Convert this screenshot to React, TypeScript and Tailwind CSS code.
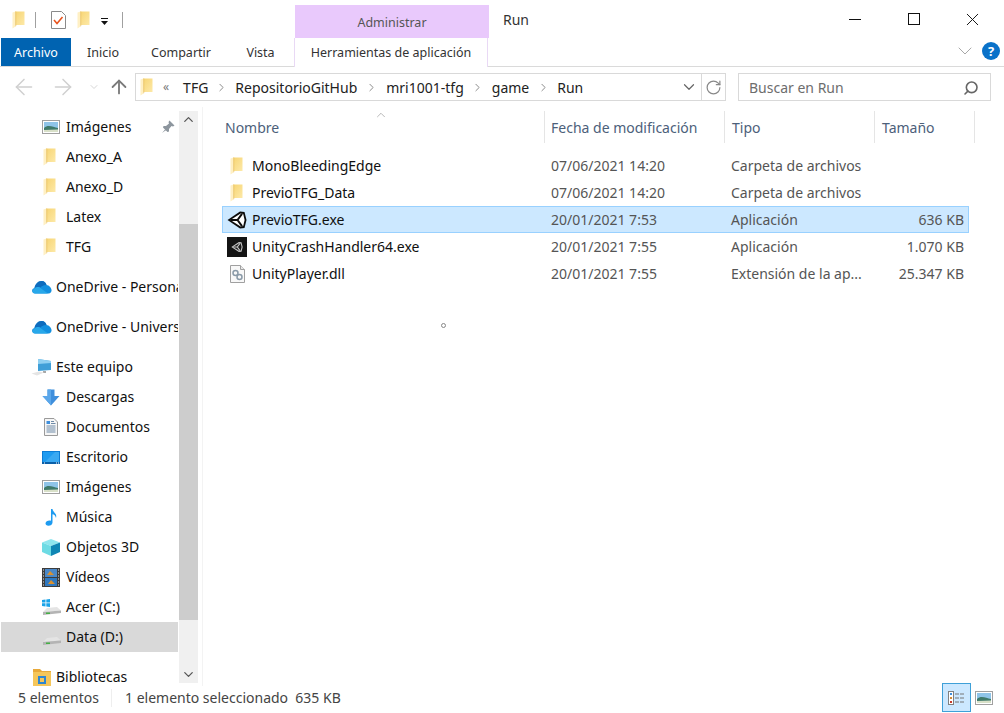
import type { ReactNode } from "react";
import { ArrowLeft, ArrowRight, ArrowUp, ChevronDown, ChevronRight, ChevronUp, RotateCw, Search, X } from "lucide-react";

function FolderIcon({ className = "" }: { className?: string }) {
  return (
    <svg width="13" height="18" viewBox="0 0 13 18" className={`shrink-0 ${className}`}>
      <defs>
        <linearGradient id="fold" x1="0" y1="0" x2="1" y2="1">
          <stop offset="0" stopColor="#f7d573" />
          <stop offset="1" stopColor="#fde9a8" />
        </linearGradient>
      </defs>
      <path d="M3 0.5 L12.5 0.5 L12.5 14 L3 14 Z" fill="url(#fold)" />
      <path d="M0.5 1.5 L3.5 0.5 L3.5 15.5 L0.5 17.5 Z" fill="#fff0c4" />
      <path d="M3.5 0.5 L4.2 0.5 L4.2 15 L3.5 15.5 Z" fill="#e3bd63" />
    </svg>
  );
}

function PictureIcon() {
  return (
    <svg width="18" height="14" viewBox="0 0 18 14" className="shrink-0">
      <rect x="0.5" y="0.5" width="17" height="13" fill="#fff" stroke="#a0a0a0" />
      <rect x="2" y="2" width="14" height="10" fill="#8fc4e8" />
      <path d="M2 8 C6 4 11 7 16 8 L16 12 L2 12 Z" fill="#3f7a6a" />
      <path d="M2 10 L16 9.5 L16 12 L2 12 Z" fill="#d8e0c8" />
    </svg>
  );
}

function CloudIcon() {
  return (
    <svg width="21" height="14" viewBox="0 0 21 14" className="shrink-0">
      <path d="M4 13.5 C0.5 13.5 0 8.5 3.5 8 C4 4.5 7 1 10.5 1 C13.5 1 15 3 15.5 5 C18 5 21 8.5 20.5 11 C20 13 18.5 13.5 17 13.5 Z" fill="#1490df" />
      <path d="M3.5 8 C4 4.5 7 1 10.5 1 C13.5 1 15 3 15.5 5 C12 5 10 6.5 9.5 7.5 C7 6.5 5 7 3.5 8 Z" fill="#0f6cbd" />
      <path d="M4 13.5 C1.5 13.5 1 10 3 9 C6 6 9 7 10 8.5 L17 13.5 Z" fill="#28a8ea" />
    </svg>
  );
}

function PcIcon() {
  return (
    <svg width="21" height="18" viewBox="0 0 21 18" className="shrink-0">
      <path d="M7 1 L20 3 L20 12 L7 13 Z" fill="#3f9fd8" />
      <path d="M7 1 L20 3 L20 5 L7 6 Z" fill="#8fd0f2" />
      <path d="M12 13 L15 13 L15 15 L12 15 Z" fill="#a8a8a8" />
      <path d="M0.5 15.5 L8 13.5 L13 14.5 L6 17.5 Z" fill="#e4e4e4" />
    </svg>
  );
}

function DownloadIcon() {
  return (
    <svg width="18" height="17" viewBox="0 0 18 17" className="shrink-0">
      <path d="M5.5 0.5 L12.5 0.5 L12.5 7 L17.5 7 L9 16.5 L0.5 7 L5.5 7 Z" fill="#3f8fdc" />
      <path d="M5.5 0.5 L9 0.5 L9 16.5 L0.5 7 L5.5 7 Z" fill="#5ba7ea" />
    </svg>
  );
}

function DocIcon() {
  return (
    <svg width="14" height="18" viewBox="0 0 14 18" className="shrink-0">
      <path d="M0.5 0.5 L10 0.5 L13.5 4 L13.5 17.5 L0.5 17.5 Z" fill="#f6f6f6" stroke="#9a9a9a" />
      <rect x="2.5" y="3" width="3.5" height="3" fill="#3f8fdc" />
      <path d="M7 3.5 H10 M7 5.5 H11.5 M2.5 8 H11.5 M2.5 10 H11.5 M2.5 12 H11.5 M2.5 14 H11.5" stroke="#6f8ba8" />
    </svg>
  );
}

function DesktopIcon() {
  return (
    <svg width="18" height="13" viewBox="0 0 18 13" className="shrink-0">
      <rect width="18" height="13" fill="#0c7cd5" />
      <rect x="1" y="1" width="16" height="10" fill="#1e9bf0" />
      <path d="M3 11 L13 1 L17 1 L17 11 Z" fill="#3aa9f2" />
      <rect x="0" y="11" width="18" height="2" fill="#0a5fa8" />
      <path d="M2 12 H3 M14 12 H15 M16 12 H17" stroke="#ffffff" />
    </svg>
  );
}

function MusicIcon() {
  return (
    <svg width="13" height="17" viewBox="0 0 13 17" className="shrink-0">
      <path d="M6 0 L7.5 0 C8 3.5 12.5 4.5 11 9 C10.5 6.5 9 5.5 7.5 5.2 L7.5 13.5 C7.5 15.5 5.5 16.8 3.5 16.8 C1.5 16.8 0.5 15.7 0.5 14.5 C0.5 12.8 2.5 11.5 4.5 11.5 C5 11.5 5.6 11.6 6 11.8 Z" fill="#1e9bf0" />
    </svg>
  );
}

function CubeIcon() {
  return (
    <svg width="18" height="17" viewBox="0 0 18 17" className="shrink-0">
      <path d="M9 0 L18 3.5 L9 7 L0 3.5 Z" fill="#8fe6ee" />
      <path d="M0 3.5 L9 7 L9 17 L0 13 Z" fill="#6ddbe4" />
      <path d="M18 3.5 L9 7 L9 17 L18 13 Z" fill="#0f86b4" />
    </svg>
  );
}

function VideoIcon() {
  return (
    <svg width="18" height="19" viewBox="0 0 18 19" className="shrink-0">
      <rect width="18" height="19" fill="#3c3c3c" />
      <rect x="3" y="1" width="12" height="8" fill="#4a88c8" />
      <rect x="3" y="10" width="12" height="8" fill="#2f78c0" />
      <path d="M5 7 L8 3 L12 7 Z M6 16 L9 12 L13 16 Z" fill="#d9902f" />
      <path d="M1 2 H2 M1 5 H2 M1 8 H2 M1 11 H2 M1 14 H2 M1 17 H2 M16 2 H17 M16 5 H17 M16 8 H17 M16 11 H17 M16 14 H17 M16 17 H17" stroke="#e8e8e8" />
    </svg>
  );
}

function DriveIcon({ windows = false }: { windows?: boolean }) {
  return (
    <svg width="19" height="17" viewBox="0 0 19 17" className="shrink-0">
      {windows && <path d="M0 1 L3.5 0.5 L3.5 3.5 L0 3.5 Z M4.3 0.4 L8 0 L8 3.5 L4.3 3.5 Z M0 4.3 L3.5 4.3 L3.5 7.5 L0 7 Z M4.3 4.3 L8 4.3 L8 8 L4.3 7.6 Z" fill="#1aa3e8" />}
      <path d="M1 13 L5 9 L15 8 L19 11.5 Z" fill="#e4e4e4" />
      <path d="M1 13 L19 11.5 L19 14 L1 16 Z" fill="#b4b4b4" />
      <rect x="4" y="13.5" width="4" height="1.5" fill="#45b045" />
    </svg>
  );
}

function LibraryIcon() {
  return (
    <svg width="18" height="18" viewBox="0 0 18 18" className="shrink-0">
      <path d="M0 1 L7 1 L9 3 L18 3 L18 18 L0 18 Z" fill="#e8a93a" />
      <rect x="0" y="4" width="18" height="14" fill="#f5c65a" />
      <rect x="5" y="8" width="8" height="8" fill="#2f86d0" />
      <rect x="7" y="10" width="4" height="4" fill="#f5c65a" />
    </svg>
  );
}

function UnityMark({ dark = true, size = 20 }: { dark?: boolean; size?: number }) {
  const light = dark ? "#ffffff" : "#c4c4c4";
  const ink = dark ? "#0c0c0c" : "#1a1a1a";
  return (
    <svg width={size} height={size} viewBox="0 0 20 20" className="shrink-0">
      <path d="M0.5 10 L13 1.5 L17.5 2 L19.5 10 L17.5 18 L13 18.5 Z" fill={dark ? ink : light} />
      <path d="M3.4 10 L13.6 3.6 L16.2 4 L17.6 10 L16.2 16 L13.6 16.4 Z" fill={dark ? light : ink} />
      <path d="M3.4 10 L10.5 10 M10.5 10 L15 3.8 M10.5 10 L15 16.2" stroke={dark ? ink : light} strokeWidth="2" fill="none" />
    </svg>
  );
}

function DllIcon() {
  return (
    <svg width="15" height="18" viewBox="0 0 15 18" className="shrink-0">
      <path d="M0.5 0.5 L10.5 0.5 L14.5 4.5 L14.5 17.5 L0.5 17.5 Z" fill="#f8f8f8" stroke="#a0a0a0" />
      <path d="M10.5 0.5 L10.5 4.5 L14.5 4.5" fill="#e8e8e8" stroke="#a0a0a0" />
      <circle cx="5.5" cy="8" r="2.5" fill="none" stroke="#8a9aa8" strokeWidth="1.5" />
      <circle cx="9.5" cy="12" r="2.5" fill="none" stroke="#8a9aa8" strokeWidth="1.5" />
    </svg>
  );
}

function PinIcon() {
  return (
    <svg width="14" height="14" viewBox="0 0 14 14" className="shrink-0">
      <path d="M8.5 0.5 L13.5 5.5 L12 6.5 L10.5 6 L8 9 L8 11.5 L6.5 12 L2 7.5 L2.5 6 L5 6 L8 3.5 L7.5 2 Z M4 9.5 L1 13 L4.8 10.2 Z" fill="#8d969e" />
    </svg>
  );
}

function NavRow({ icon, label, indent = true, selected = false, gapTop = "" }: { icon: ReactNode; label: string; indent?: boolean; selected?: boolean; gapTop?: string }) {
  return (
    <div className={`flex h-[30px] items-center ${gapTop} ${selected ? "bg-[#d9d9d9]" : ""}`}>
      <div className={`flex shrink-0 items-center justify-center ${indent ? "ml-[41px] w-[18px]" : "ml-[30px] w-[21px]"}`}>{icon}</div>
      <span className={`whitespace-nowrap text-[#101010] ${indent ? "ml-[6px]" : "ml-[4px]"}`}>{label}</span>
    </div>
  );
}

const files = [
  { name: "MonoBleedingEdge", date: "07/06/2021 14:20", type: "Carpeta de archivos", size: "", icon: <FolderIcon className="mr-[2px]" /> },
  { name: "PrevioTFG_Data", date: "07/06/2021 14:20", type: "Carpeta de archivos", size: "", icon: <FolderIcon className="mr-[2px]" /> },
  { name: "PrevioTFG.exe", date: "20/01/2021 7:53", type: "Aplicación", size: "636 KB", icon: <UnityMark />, selected: true },
  {
    name: "UnityCrashHandler64.exe",
    date: "20/01/2021 7:55",
    type: "Aplicación",
    size: "1.070 KB",
    icon: (
      <div className="flex size-[20px] items-center justify-center bg-[#141414]">
        <UnityMark dark={false} size={12} />
      </div>
    ),
  },
  { name: "UnityPlayer.dll", date: "20/01/2021 7:55", type: "Extensión de la ap...", size: "25.347 KB", icon: <DllIcon /> },
];

function Crumb({ w }: { w: string }) {
  return (
    <span className={`flex shrink-0 justify-center ${w}`}>
      <ChevronRight size={13} strokeWidth={1.8} color="#8a8a8a" />
    </span>
  );
}

const navFolder = <FolderIcon className="mr-[4px]" />;

export default function App() {
  return (
    <div className="relative flex h-[713px] w-[1004px] flex-col overflow-hidden bg-white text-[14px] leading-[20px] text-[#1a1a1a] [font-family:'Noto_Sans',sans-serif]">
      {/* title bar */}
      <div className="flex h-[38px] shrink-0 items-end">
        <div className="flex h-[38px] w-[295px] items-center pl-[12px] pt-[2px]">
          <FolderIcon />
          <div className="ml-[10px] h-[16px] w-px bg-[#a0a0a0]" />
          <svg width="15" height="18" viewBox="0 0 15 18" className="ml-[15px] shrink-0">
            <path d="M0.5 0.5 L10.5 0.5 L14.5 4.5 L14.5 17.5 L0.5 17.5 Z" fill="#fff" stroke="#8a8a8a" />
            <path d="M3 9 L6 12.5 L11.5 6" fill="none" stroke="#e8541e" strokeWidth="1.6" />
          </svg>
          <FolderIcon className="ml-[11px]" />
          <svg width="8" height="8" viewBox="0 0 8 8" className="ml-[11px] mt-[3px] shrink-0">
            <path d="M0 0 H7 V1 H0 Z M0 3 H7 L3.5 7 Z" fill="#111" />
          </svg>
          <div className="ml-[13px] h-[16px] w-px bg-[#a0a0a0]" />
        </div>
        <div className="flex h-[33px] w-[194px] items-center justify-center bg-[#e9c9fc] pt-[3px] text-[12.5px] text-[#555555]">Administrar</div>
        <div className="ml-[14px] self-start pt-[10px] text-[#333333]">Run</div>
        <div className="ml-auto flex self-start pr-[2px]">
          <div className="flex h-[38px] w-[59px] items-center justify-center">
            <div className="h-px w-[12px] bg-[#111]" />
          </div>
          <div className="flex h-[38px] w-[59px] items-center justify-center">
            <div className="size-[12px] border border-[#111]" />
          </div>
          <div className="flex h-[38px] w-[59px] items-center justify-center">
            <X size={21} strokeWidth={1.1} color="#111" />
          </div>
        </div>
      </div>

      {/* ribbon tabs */}
      <div className="flex h-[29px] shrink-0 items-stretch border-b border-[#dadada] pl-px text-[12.5px] text-[#333333]">
        <div className="flex w-[70px] items-center justify-center bg-[#0063b1] pt-px text-white">Archivo</div>
        <div className="flex w-[64px] items-center justify-center pt-px">Inicio</div>
        <div className="flex w-[92px] items-center justify-center pt-px">Compartir</div>
        <div className="flex w-[67px] items-center justify-center pt-px">Vista</div>
        <div className="-mb-px flex w-[194px] items-center justify-center border-x border-[#e9d9f5] bg-white pt-px">Herramientas de aplicación</div>
        <div className="ml-auto mr-[4px] flex items-center gap-[5px] pb-[2px]">
          <ChevronDown size={24} strokeWidth={1} color="#a8a8a8" />
          <div className="flex size-[18px] items-center justify-center rounded-full bg-[#0a72c9] text-[13px] font-bold text-white">?</div>
        </div>
      </div>

      {/* address row */}
      <div className="flex h-[40px] shrink-0 items-center">
        <div className="flex w-[135px] items-center pl-[11px]">
          <ArrowLeft size={26} strokeWidth={1.4} color="#d0d0d0" />
          <ArrowRight size={26} strokeWidth={1.4} color="#d0d0d0" className="ml-[13px]" />
          <ChevronDown size={12} strokeWidth={1.5} color="#c8c8c8" className="ml-[12px]" />
          <ArrowUp size={22} strokeWidth={2} color="#7a7a7a" className="ml-[8px]" />
        </div>
        <div className="flex h-[28px] w-[591px] items-center border border-[#d9d9d9] text-[#222222]">
          <FolderIcon className="ml-[4px]" />
          <span className="ml-[10px] text-[12px] text-[#777777]">«</span>
          <span className="ml-[14px] pt-px">TFG</span>
          <Crumb w="w-[27px]" />
          <span className="pt-px">RepositorioGitHub</span>
          <Crumb w="w-[29px]" />
          <span className="pt-px">mri1001-tfg</span>
          <Crumb w="w-[28px]" />
          <span className="pt-px">game</span>
          <Crumb w="w-[28px]" />
          <span className="pt-px">Run</span>
          <ChevronDown size={18} strokeWidth={1.6} color="#666666" className="ml-auto mr-[3px]" />
          <div className="flex h-full w-[24px] items-center justify-center border-l border-[#d9d9d9]">
            <RotateCw size={17} strokeWidth={1.7} color="#888888" />
          </div>
        </div>
        <div className="ml-[12px] flex h-[28px] w-[253px] items-center justify-between border border-[#d9d9d9] pl-[10px] pr-[11px] pt-px text-[#6d6d6d]">
          <span>Buscar en Run</span>
          <Search size={16} strokeWidth={2.4} color="#666666" className="-scale-x-100" />
        </div>
      </div>

      {/* main */}
      <div className="flex min-h-0 flex-1">
        <div className="flex w-[199px] shrink-0 pl-px">
          <div className="w-[177px] overflow-hidden pt-[5px]">
            <div className="relative flex h-[30px] items-center">
              <div className="ml-[41px] flex w-[18px] shrink-0 justify-center"><PictureIcon /></div>
              <span className="ml-[6px] text-[#101010]">Imágenes</span>
              <div className="absolute left-[160px] top-[8px]"><PinIcon /></div>
            </div>
            <NavRow icon={navFolder} label="Anexo_A" />
            <NavRow icon={navFolder} label="Anexo_D" />
            <NavRow icon={navFolder} label="Latex" />
            <NavRow icon={navFolder} label="TFG" />
            <NavRow icon={<CloudIcon />} label="OneDrive - Personal" indent={false} gapTop="mt-[10px]" />
            <NavRow icon={<CloudIcon />} label="OneDrive - Universitat" indent={false} gapTop="mt-[10px]" />
            <NavRow icon={<PcIcon />} label="Este equipo" indent={false} gapTop="mt-[10px]" />
            <NavRow icon={<DownloadIcon />} label="Descargas" />
            <NavRow icon={<DocIcon />} label="Documentos" />
            <NavRow icon={<DesktopIcon />} label="Escritorio" />
            <NavRow icon={<PictureIcon />} label="Imágenes" />
            <NavRow icon={<MusicIcon />} label="Música" />
            <NavRow icon={<CubeIcon />} label="Objetos 3D" />
            <NavRow icon={<VideoIcon />} label="Vídeos" />
            <NavRow icon={<DriveIcon windows />} label="Acer (C:)" />
            <NavRow icon={<DriveIcon />} label="Data (D:)" selected />
            <NavRow icon={<LibraryIcon />} label="Bibliotecas" indent={false} gapTop="mt-[10px]" />
          </div>
          <div className="ml-px mt-[4px] flex h-[572px] w-[19px] flex-col bg-[#f0f0f0]">
            <div className="flex h-[17px] shrink-0 items-center justify-center">
              <ChevronUp size={15} strokeWidth={2} color="#555555" />
            </div>
            <div className="mt-[96px] h-[396px] bg-[#cdcdcd]" />
            <div className="mt-auto flex h-[17px] shrink-0 items-center justify-center">
              <ChevronDown size={15} strokeWidth={2} color="#555555" />
            </div>
          </div>
        </div>

        <div className="relative ml-[3px] min-w-0 flex-1 border-l border-[#f3f3f3]">
          <div className="relative flex h-[36px] pt-[4px] text-[#4c607a]">
            <div className="flex w-[342px] items-center border-r border-[#e5e5e5] pl-[22px] pt-px">Nombre</div>
            <div className="flex w-[180px] items-center border-r border-[#e5e5e5] pl-[6px] pt-px">Fecha de modificación</div>
            <div className="flex w-[150px] items-center border-r border-[#e5e5e5] pl-[7px] pt-px">Tipo</div>
            <div className="flex w-[100px] items-center border-r border-[#e5e5e5] pl-[7px] pt-px">Tamaño</div>
            <ChevronUp size={14} strokeWidth={1} color="#888888" className="absolute left-[171px] top-px" />
          </div>
          <div className="ml-[19px] mr-[35px] mt-[9px]">
            {files.map((f) => (
              <div key={f.name} className={`flex h-[27px] items-center border ${f.selected ? "border-[#99d1ff] bg-[#cce8ff]" : "border-transparent"}`}>
                <div className="ml-[4px] flex w-[20px] shrink-0 items-center justify-center">{f.icon}</div>
                <span className="ml-[5px] w-[299px] shrink-0 whitespace-nowrap text-[#101010]">{f.name}</span>
                <span className="w-[180px] shrink-0 whitespace-nowrap text-[#555555]">{f.date}</span>
                <span className="w-[150px] shrink-0 whitespace-nowrap text-[#555555]">{f.type}</span>
                <span className="w-[83px] shrink-0 whitespace-nowrap text-right text-[#555555]">{f.size}</span>
              </div>
            ))}
          </div>
          <div className="absolute left-[238px] top-[216px] size-[5px] rounded-full border border-[#888888]" />
        </div>
      </div>

      {/* status bar */}
      <div className="flex h-[27px] shrink-0 items-center pb-[4px] pl-[18px] text-[#444444]">
        <span className="w-[93px]">5 elementos</span>
        <div className="h-[18px] w-px bg-[#eeeeee]" />
        <span className="ml-[13px] whitespace-pre">1 elemento seleccionado  635 KB</span>
        <div className="ml-auto mr-[8px] flex items-center">
          <div className="flex h-[29px] w-[29px] items-center justify-center border border-[#3ea0d8] bg-[#cce8ff]">
            <svg width="18" height="14" viewBox="0 0 18 14">
              <rect x="0.5" y="0.5" width="5" height="13" fill="#fff" stroke="#808080" />
              <rect x="2" y="2" width="2" height="2" fill="#3f8fdc" />
              <rect x="2" y="6" width="2" height="2" fill="#d08a3a" />
              <rect x="2" y="10" width="2" height="2" fill="#c83a2a" />
              <path d="M7 3 H17 M7 7 H17 M7 11 H17" stroke="#777777" strokeDasharray="4 1" />
            </svg>
          </div>
          <div className="flex h-[29px] w-[25px] items-center justify-center">
            <PictureIcon />
          </div>
        </div>
      </div>
    </div>
  );
}
